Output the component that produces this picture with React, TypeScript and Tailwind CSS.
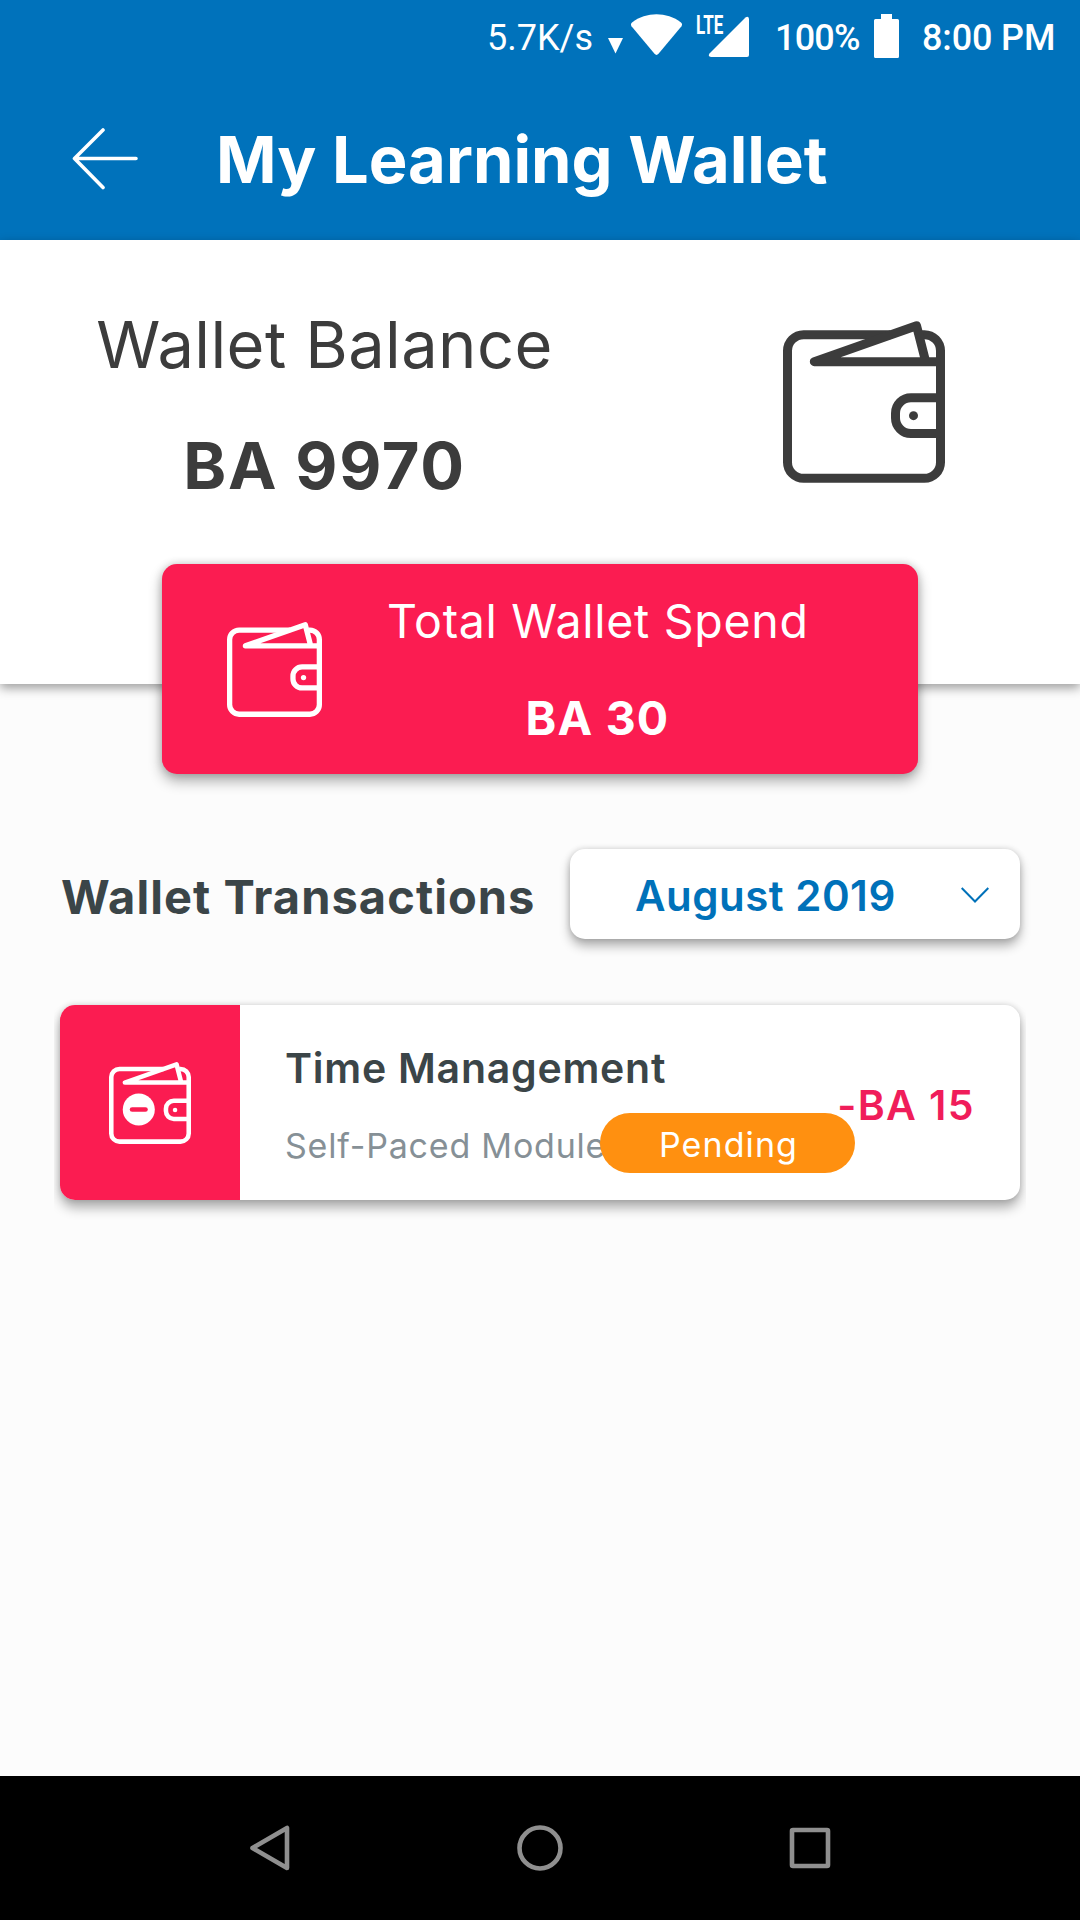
import React from 'react';

interface WalletIconProps {
  className?: string;
  minus?: boolean;
}

function WalletIcon({ className, minus = false }: WalletIconProps) {
  return (
    <svg viewBox="69 63 486 485" className={className} fill="none" stroke="currentColor" strokeWidth={27}>
      <path d="M392 103.5H131a48.5 48.5 0 0 0-48.5 48.5v334a48.5 48.5 0 0 0 48.5 48.5h362a48.5 48.5 0 0 0 48.5-48.5V152a48.5 48.5 0 0 0-48.5-48.5h-8" />
      <path d="M541 184.500H163L469.500 76.500L497 184" strokeLinejoin="round" />
      <path d="M541 292.500H453a46.500 46.500 0 0 0-46.500 46.500v14.500a46.500 46.500 0 0 0 46.500 46.500H541" />
      <circle cx="460.5" cy="346.5" r="13.5" fill="currentColor" stroke="none" />
      {minus && (
        <>
          <circle cx="245.500" cy="344" r="95" fill="currentColor" stroke="none" />
          <path d="M206 344H285" stroke="#fb1c51" strokeWidth={28} strokeLinecap="round" />
        </>
      )}
    </svg>
  );
}

function StatusBar() {
  return (
    <div className="flex h-[75px] items-center pl-[487px] font-['Roboto',sans-serif] text-[36px] leading-[75px] whitespace-nowrap">
      <span className="w-[107px] shrink-0 pt-0.5">5.7K/s</span>
      <svg viewBox="608 0 15 75" className="ml-[14px] h-[75px] w-[15px] shrink-0" fill="currentColor">
        <path d="M608 38h15l-7.500 15.500z" />
      </svg>
      <svg viewBox="631 0 52 75" className="ml-2 h-[75px] w-[52px] shrink-0" fill="currentColor">
        <path d="M632 22.500C639 17 648 14.300 656.500 14.300S674 17 681 22.500Q682.800 24.300 681.500 26.200L658.500 53.800Q656.500 56 654.500 53.800L631.500 26.200Q630.200 24.300 632 22.500z" />
      </svg>
      <div className="relative ml-[13px] h-[75px] w-[53px] shrink-0">
        <svg viewBox="696 0 53 75" className="h-[75px] w-[53px]" fill="currentColor">
          <path d="M749 19v36q0 2-2 2h-36q-3.500-.5-1.500-3.500L745.500 17.500q3-1.800 3.500 1.500z" />
        </svg>
        <span className="absolute top-[13px] left-0 origin-left scale-x-[0.68] text-[25px] leading-[25px] font-bold">LTE</span>
      </div>
      <span className="ml-[26px] w-[85px] shrink-0 pt-0.5 font-medium tracking-[-0.8px]">100%</span>
      <svg viewBox="874 0 25 75" className="ml-[14px] h-[75px] w-[25px] shrink-0" fill="currentColor">
        <path d="M881 14h11v5h5.500q1.500 0 1.500 1.500v36q0 1.500-1.500 1.500h-22q-1.500 0-1.500-1.500v-36q0-1.500 1.500-1.500h5.500z" />
      </svg>
      <span className="ml-[23px] pt-0.5 font-medium tracking-[-0.15px]">8:00 PM</span>
    </div>
  );
}

function Header() {
  return (
    <header className="h-[240px] bg-[#0072bb] text-white">
      <StatusBar />
      <div className="flex h-[169px] items-center pl-[72px]">
        <svg viewBox="0 0 66 64" className="mb-0.5 h-16 w-[66px]" fill="none" stroke="currentColor" strokeWidth={3.600} strokeLinecap="round" strokeLinejoin="round">
          <path d="M64 31.500H2.500M31 3L2.500 31.500L31 60.500" />
        </svg>
        <h1 className="ml-[78px] text-[65px] leading-[80px] font-bold tracking-[0.05px]">My Learning Wallet</h1>
      </div>
    </header>
  );
}

function Balance() {
  return (
    <section className="flex h-[444px] bg-white text-[#3c3c3c] shadow-[0_4px_10px_rgba(0,0,0,0.38)]">
      <div className="w-[649px] pt-11 text-center text-[65px] leading-[121px]">
        <p className="tracking-[0.4px]">Wallet Balance</p>
        <p className="font-bold tracking-[1.7px]">BA 9970</p>
      </div>
      <div className="flex w-[430px] justify-center pt-[81px]">
        <WalletIcon className="h-[162px] w-[162px]" />
      </div>
    </section>
  );
}

function SpendCard() {
  return (
    <section className="relative mx-auto -mt-[120px] flex h-[210px] w-[756px] items-center rounded-[15px] bg-[#fb1c51] text-white shadow-[0_7px_14px_rgba(0,0,0,0.32),0_0_9px_rgba(0,0,0,0.18)]">
      <div className="flex w-[225px] justify-center">
        <WalletIcon className="h-[95px] w-[95px]" />
      </div>
      <div className="w-[421px] pt-0.5 text-center text-[46.500px] leading-[97px] whitespace-nowrap">
        <p className="tracking-[0.7px]">Total Wallet Spend</p>
        <p className="font-bold tracking-[1.2px]">BA 30</p>
      </div>
    </section>
  );
}

function MonthSelect() {
  return (
    <button className="flex h-[90px] w-[450px] items-center rounded-[15px] bg-white pl-[65px] text-[#0071b9] shadow-[0_7px_11px_rgba(0,0,0,0.3),0_0_6px_rgba(0,0,0,0.16)]">
      <span className="w-[326px] pt-1 text-left text-[42px] leading-[50px] font-semibold tracking-[0.5px]">August 2019</span>
      <svg viewBox="0 0 28 16" className="mt-0.5 h-4 w-7" fill="none" stroke="currentColor" strokeWidth={2}>
        <path d="M.7 1L14 14.500L27.300 1" />
      </svg>
    </button>
  );
}

interface Transaction {
  title: string;
  kind: string;
  status: string;
  amount: string;
}

const transactions: Transaction[] = [
  { title: 'Time Management', kind: 'Self-Paced Module', status: 'Pending', amount: '-BA 15' },
];

function TransactionCard({ title, kind, status, amount }: Transaction) {
  return (
    <li className="relative flex h-[195px] rounded-[15px] bg-white shadow-[0_8px_12px_rgba(0,0,0,0.3),0_0_6px_rgba(0,0,0,0.16)]">
      <div className="flex w-[180px] items-center justify-center rounded-l-[15px] bg-[#fb1c51] text-white">
        <WalletIcon className="h-[82px] w-[82px]" minus />
      </div>
      <div className="pt-[25px] pl-[45px] leading-[77px]">
        <p className="text-[41px] font-semibold tracking-[0.75px] text-[#3b4548]">{title}</p>
        <p className="text-[34px] tracking-[0.8px] text-[#869096]">{kind}</p>
      </div>
      {/* badge sits over the end of the subtitle */}
      <span className="absolute top-[108px] left-[540px] h-[60px] w-[255px] rounded-full bg-[#ff9010] pt-0.5 pl-0.5 text-center text-[34px] leading-[60px] tracking-[1.1px] text-white">
        {status}
      </span>
      <span className="relative mr-[45px] ml-auto pt-[5px] text-[41px] leading-[190px] font-semibold tracking-[1.4px] text-[#f01d5a]">
        {amount}
      </span>
    </li>
  );
}

function NavBar() {
  return (
    <nav className="flex h-36 items-center justify-center gap-[222px] bg-black text-[#8f8f8f]">
      {[
        <path key="back" d="M41 4V44L6.500 24z" />,
        <circle key="home" cx="24" cy="24" r="20.500" />,
        <rect key="recent" x="6" y="6" width="36" height="36" rx="1" />,
      ].map((shape, i) => (
        <svg key={i} viewBox="0 0 48 48" className="h-12 w-12" fill="none" stroke="currentColor" strokeWidth={4.600} strokeLinejoin="round">
          {shape}
        </svg>
      ))}
    </nav>
  );
}

export default function App() {
  return (
    <div className="flex h-[1920px] w-[1080px] flex-col overflow-hidden bg-[#fcfcfc] font-['Inter',sans-serif]">
      <Header />
      <main className="flex-1">
        <Balance />
        <SpendCard />
        <div className="mt-[75px] flex items-center justify-between pr-[60px] pl-[61px]">
          <h2 className="pt-1.5 text-[47px] leading-[60px] font-bold tracking-[1.05px] text-[#3b4548]">Wallet Transactions</h2>
          <MonthSelect />
        </div>
        <ul className="mx-[54px] mt-[46px] overflow-hidden px-1.5 pt-5 pb-8">
          {transactions.map((t) => (
            <TransactionCard key={t.title} {...t} />
          ))}
        </ul>
      </main>
      <NavBar />
    </div>
  );
}
